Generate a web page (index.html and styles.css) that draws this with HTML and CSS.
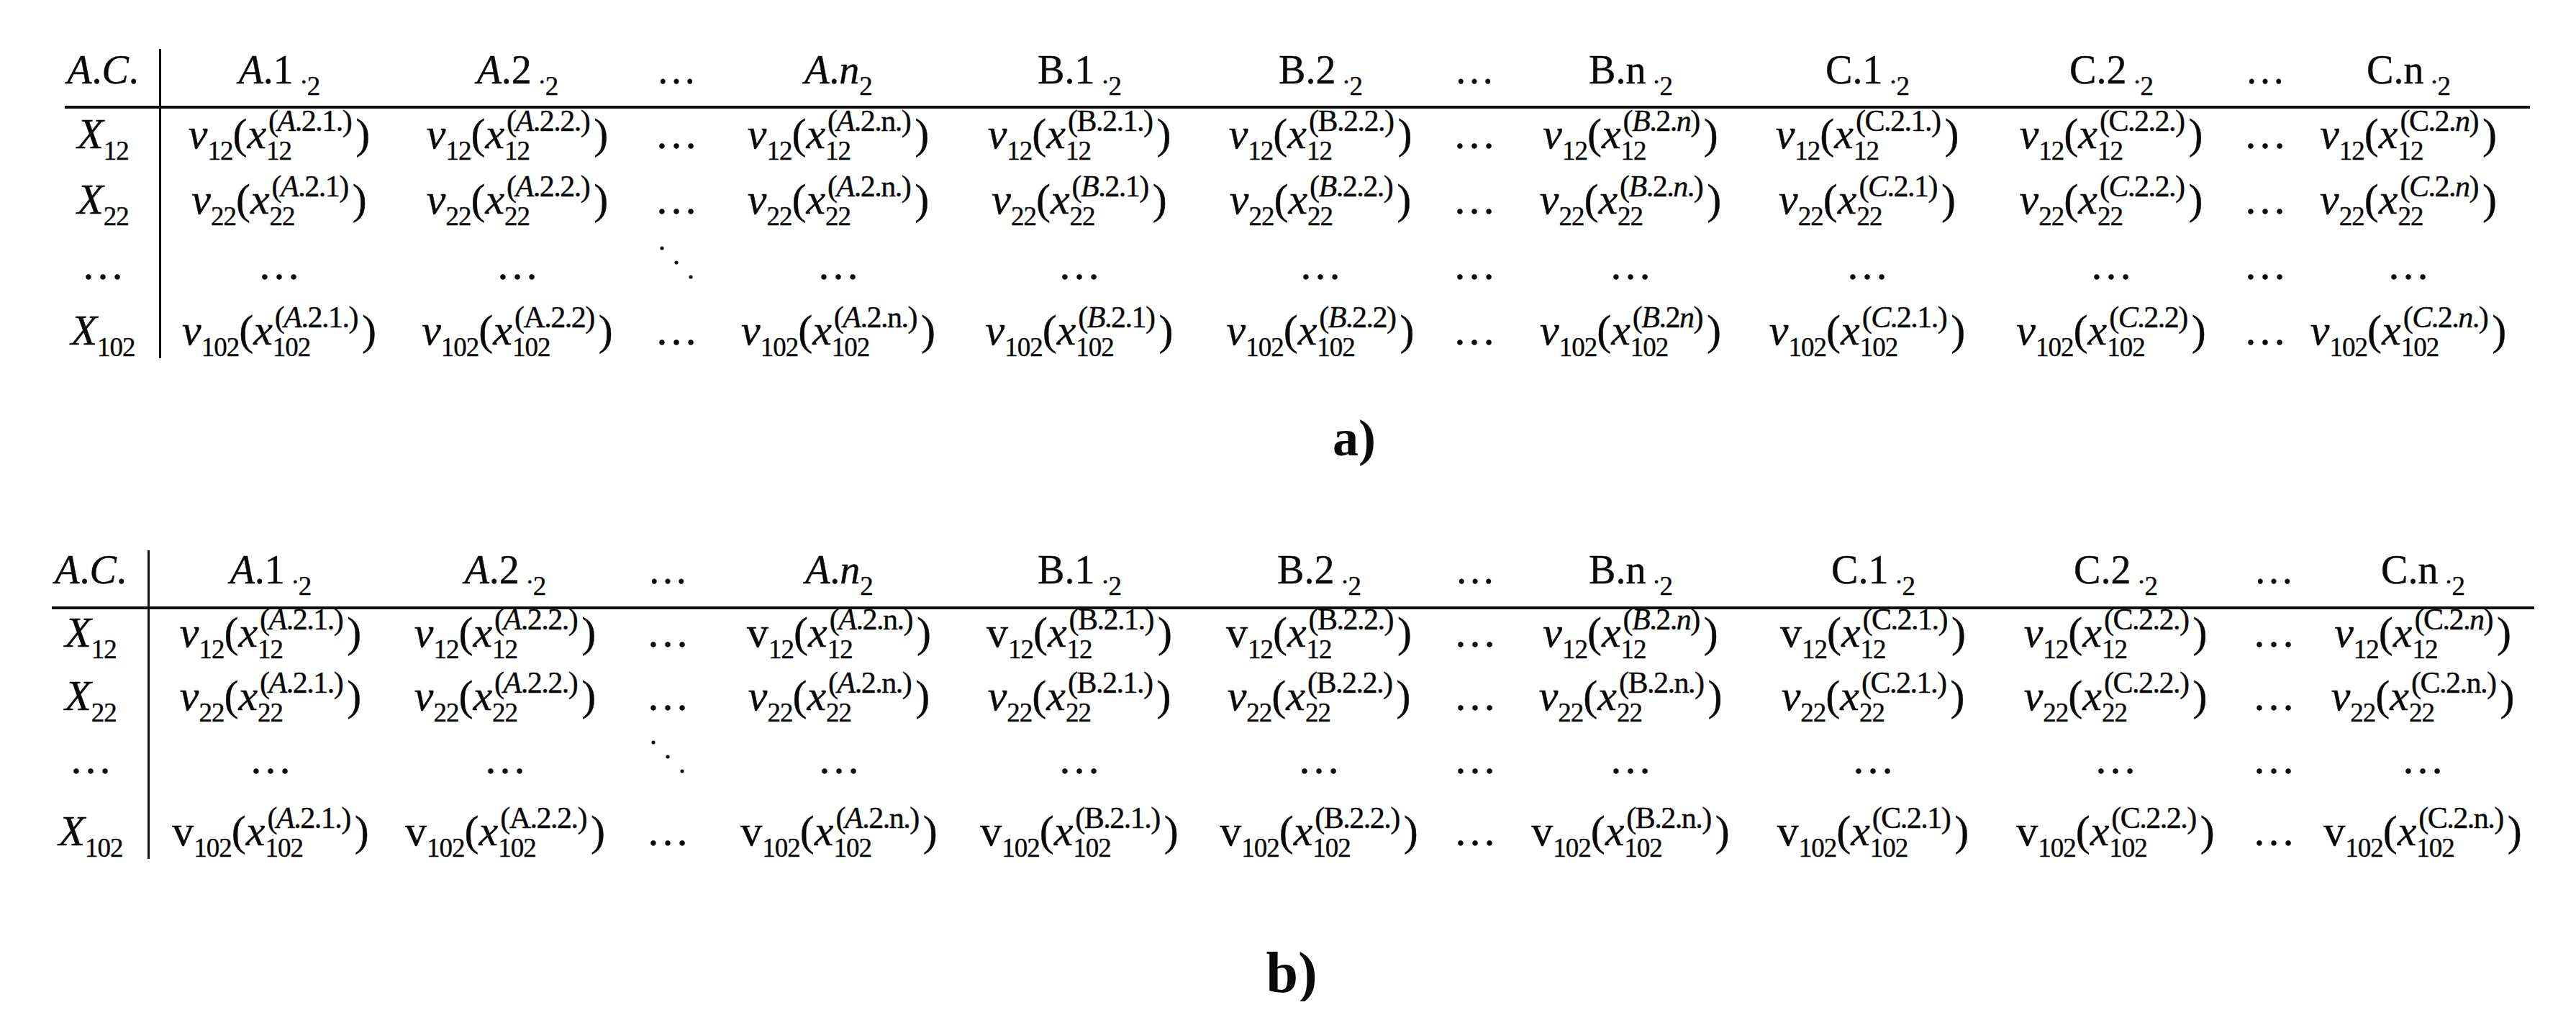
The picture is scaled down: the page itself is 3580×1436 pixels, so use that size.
FILE: index.html
```html
<!DOCTYPE html>
<html lang="en">
<head>
<meta charset="utf-8">
<title>Matrices a) and b)</title>
<link rel="stylesheet" href="styles.css">
</head>
<body>
<div class="page">

<div class="tbl tbl-a">
  <!-- header -->
  <div class="c c0 th"><span class="m"><i>A</i>.<i>C</i>.</span></div>
  <div class="c th"><span class="m"><i>A</i>.1<span class="hdot">.</span><sub>2</sub></span></div>
  <div class="c th"><span class="m"><i>A</i>.2<span class="hdot">.</span><sub>2</sub></span></div>
  <div class="c th"><span class="m">…</span></div>
  <div class="c th"><span class="m"><i>A</i>.<i>n</i><sub>2</sub></span></div>
  <div class="c th"><span class="m">B.1<span class="hdot">.</span><sub>2</sub></span></div>
  <div class="c th"><span class="m">B.2<span class="hdot">.</span><sub>2</sub></span></div>
  <div class="c th"><span class="m">…</span></div>
  <div class="c th"><span class="m">B.n<span class="hdot">.</span><sub>2</sub></span></div>
  <div class="c th"><span class="m">C.1<span class="hdot">.</span><sub>2</sub></span></div>
  <div class="c th"><span class="m">C.2<span class="hdot">.</span><sub>2</sub></span></div>
  <div class="c th"><span class="m">…</span></div>
  <div class="c th"><span class="m">C.n<span class="hdot">.</span><sub>2</sub></span></div>

  <!-- row X12 -->
  <div class="c c0 td"><span class="m"><i>X</i><sub>12</sub></span></div>
  <div class="c td"><span class="m"><i>v</i><sub>12</sub>(<i>x</i><span class="ss"><span class="sp">(<i>A</i>.2.1.)</span><span class="sb">12</span></span><span class="cp">)</span></span></div>
  <div class="c td"><span class="m"><i>v</i><sub>12</sub>(<i>x</i><span class="ss"><span class="sp">(<i>A</i>.2.2.)</span><span class="sb">12</span></span><span class="cp">)</span></span></div>
  <div class="c td"><span class="m">…</span></div>
  <div class="c td"><span class="m"><i>v</i><sub>12</sub>(<i>x</i><span class="ss"><span class="sp">(<i>A</i>.2.n.)</span><span class="sb">12</span></span><span class="cp">)</span></span></div>
  <div class="c td"><span class="m"><i>v</i><sub>12</sub>(<i>x</i><span class="ss"><span class="sp">(B.2.1.)</span><span class="sb">12</span></span><span class="cp">)</span></span></div>
  <div class="c td"><span class="m"><i>v</i><sub>12</sub>(<i>x</i><span class="ss"><span class="sp">(B.2.2.)</span><span class="sb">12</span></span><span class="cp">)</span></span></div>
  <div class="c td"><span class="m">…</span></div>
  <div class="c td"><span class="m"><i>v</i><sub>12</sub>(<i>x</i><span class="ss"><span class="sp">(<i>B</i>.2.<i>n</i>)</span><span class="sb">12</span></span><span class="cp">)</span></span></div>
  <div class="c td"><span class="m"><i>v</i><sub>12</sub>(<i>x</i><span class="ss"><span class="sp">(C.2.1.)</span><span class="sb">12</span></span><span class="cp">)</span></span></div>
  <div class="c td"><span class="m"><i>v</i><sub>12</sub>(<i>x</i><span class="ss"><span class="sp">(C.2.2.)</span><span class="sb">12</span></span><span class="cp">)</span></span></div>
  <div class="c td"><span class="m">…</span></div>
  <div class="c td"><span class="m"><i>v</i><sub>12</sub>(<i>x</i><span class="ss"><span class="sp">(C.2.<i>n</i>)</span><span class="sb">12</span></span><span class="cp">)</span></span></div>

  <!-- row X22 -->
  <div class="c c0 td"><span class="m"><i>X</i><sub>22</sub></span></div>
  <div class="c td"><span class="m"><i>v</i><sub>22</sub>(<i>x</i><span class="ss"><span class="sp">(<i>A</i>.2.1)</span><span class="sb">22</span></span><span class="cp">)</span></span></div>
  <div class="c td"><span class="m"><i>v</i><sub>22</sub>(<i>x</i><span class="ss"><span class="sp">(<i>A</i>.2.2.)</span><span class="sb">22</span></span><span class="cp">)</span></span></div>
  <div class="c td"><span class="m">…</span></div>
  <div class="c td"><span class="m"><i>v</i><sub>22</sub>(<i>x</i><span class="ss"><span class="sp">(<i>A</i>.2.n.)</span><span class="sb">22</span></span><span class="cp">)</span></span></div>
  <div class="c td"><span class="m"><i>v</i><sub>22</sub>(<i>x</i><span class="ss"><span class="sp">(<i>B</i>.2.1)</span><span class="sb">22</span></span><span class="cp">)</span></span></div>
  <div class="c td"><span class="m"><i>v</i><sub>22</sub>(<i>x</i><span class="ss"><span class="sp">(<i>B</i>.2.2.)</span><span class="sb">22</span></span><span class="cp">)</span></span></div>
  <div class="c td"><span class="m">…</span></div>
  <div class="c td"><span class="m"><i>v</i><sub>22</sub>(<i>x</i><span class="ss"><span class="sp">(<i>B</i>.2.<i>n</i>.)</span><span class="sb">22</span></span><span class="cp">)</span></span></div>
  <div class="c td"><span class="m"><i>v</i><sub>22</sub>(<i>x</i><span class="ss"><span class="sp">(<i>C</i>.2.1)</span><span class="sb">22</span></span><span class="cp">)</span></span></div>
  <div class="c td"><span class="m"><i>v</i><sub>22</sub>(<i>x</i><span class="ss"><span class="sp">(<i>C</i>.2.2.)</span><span class="sb">22</span></span><span class="cp">)</span></span></div>
  <div class="c td"><span class="m">…</span></div>
  <div class="c td"><span class="m"><i>v</i><sub>22</sub>(<i>x</i><span class="ss"><span class="sp">(<i>C</i>.2.<i>n</i>)</span><span class="sb">22</span></span><span class="cp">)</span></span></div>

  <!-- row dots -->
  <div class="c c0 td"><span class="m">…</span></div>
  <div class="c td"><span class="m">…</span></div>
  <div class="c td"><span class="m">…</span></div>
  <div class="c td"><span class="m"><svg class="ddots" width="48" height="48" viewBox="0 0 48 48"><circle cx="4" cy="4" r="2.6"/><circle cx="24" cy="24" r="2.6"/><circle cx="44" cy="44" r="2.6"/></svg></span></div>
  <div class="c td"><span class="m">…</span></div>
  <div class="c td"><span class="m">…</span></div>
  <div class="c td"><span class="m">…</span></div>
  <div class="c td"><span class="m">…</span></div>
  <div class="c td"><span class="m">…</span></div>
  <div class="c td"><span class="m">…</span></div>
  <div class="c td"><span class="m">…</span></div>
  <div class="c td"><span class="m">…</span></div>
  <div class="c td"><span class="m">…</span></div>

  <!-- row X102 -->
  <div class="c c0 td"><span class="m"><i>X</i><sub>102</sub></span></div>
  <div class="c td"><span class="m"><i>v</i><sub>102</sub>(<i>x</i><span class="ss"><span class="sp">(<i>A</i>.2.1.)</span><span class="sb">102</span></span><span class="cp">)</span></span></div>
  <div class="c td"><span class="m"><i>v</i><sub>102</sub>(<i>x</i><span class="ss"><span class="sp">(A.2.2)</span><span class="sb">102</span></span><span class="cp">)</span></span></div>
  <div class="c td"><span class="m">…</span></div>
  <div class="c td"><span class="m"><i>v</i><sub>102</sub>(<i>x</i><span class="ss"><span class="sp">(<i>A</i>.2.n.)</span><span class="sb">102</span></span><span class="cp">)</span></span></div>
  <div class="c td"><span class="m"><i>v</i><sub>102</sub>(<i>x</i><span class="ss"><span class="sp">(<i>B</i>.2.1)</span><span class="sb">102</span></span><span class="cp">)</span></span></div>
  <div class="c td"><span class="m"><i>v</i><sub>102</sub>(<i>x</i><span class="ss"><span class="sp">(<i>B</i>.2.2)</span><span class="sb">102</span></span><span class="cp">)</span></span></div>
  <div class="c td"><span class="m">…</span></div>
  <div class="c td"><span class="m"><i>v</i><sub>102</sub>(<i>x</i><span class="ss"><span class="sp">(<i>B</i>.2<i>n</i>)</span><span class="sb">102</span></span><span class="cp">)</span></span></div>
  <div class="c td"><span class="m"><i>v</i><sub>102</sub>(<i>x</i><span class="ss"><span class="sp">(<i>C</i>.2.1.)</span><span class="sb">102</span></span><span class="cp">)</span></span></div>
  <div class="c td"><span class="m"><i>v</i><sub>102</sub>(<i>x</i><span class="ss"><span class="sp">(<i>C</i>.2.2)</span><span class="sb">102</span></span><span class="cp">)</span></span></div>
  <div class="c td"><span class="m">…</span></div>
  <div class="c td"><span class="m"><i>v</i><sub>102</sub>(<i>x</i><span class="ss"><span class="sp">(<i>C</i>.2.<i>n</i>.)</span><span class="sb">102</span></span><span class="cp">)</span></span></div>
</div>

<div class="cap cap-a">a)</div>

<div class="tbl tbl-b">
  <!-- header -->
  <div class="c c0 th"><span class="m"><i>A</i>.<i>C</i>.</span></div>
  <div class="c th"><span class="m"><i>A</i>.1<span class="hdot">.</span><sub>2</sub></span></div>
  <div class="c th"><span class="m"><i>A</i>.2<span class="hdot">.</span><sub>2</sub></span></div>
  <div class="c th"><span class="m">…</span></div>
  <div class="c th"><span class="m"><i>A</i>.<i>n</i><sub>2</sub></span></div>
  <div class="c th"><span class="m">B.1<span class="hdot">.</span><sub>2</sub></span></div>
  <div class="c th"><span class="m">B.2<span class="hdot">.</span><sub>2</sub></span></div>
  <div class="c th"><span class="m">…</span></div>
  <div class="c th"><span class="m">B.n<span class="hdot">.</span><sub>2</sub></span></div>
  <div class="c th"><span class="m">C.1<span class="hdot">.</span><sub>2</sub></span></div>
  <div class="c th"><span class="m">C.2<span class="hdot">.</span><sub>2</sub></span></div>
  <div class="c th"><span class="m">…</span></div>
  <div class="c th"><span class="m">C.n<span class="hdot">.</span><sub>2</sub></span></div>

  <!-- row X12 -->
  <div class="c c0 td"><span class="m"><i>X</i><sub>12</sub></span></div>
  <div class="c td"><span class="m"><i>v</i><sub>12</sub>(<i>x</i><span class="ss"><span class="sp">(<i>A</i>.2.1.)</span><span class="sb">12</span></span><span class="cp">)</span></span></div>
  <div class="c td"><span class="m"><i>v</i><sub>12</sub>(<i>x</i><span class="ss"><span class="sp">(<i>A</i>.2.2.)</span><span class="sb">12</span></span><span class="cp">)</span></span></div>
  <div class="c td"><span class="m">…</span></div>
  <div class="c td"><span class="m">v<sub>12</sub>(<i>x</i><span class="ss"><span class="sp">(<i>A</i>.2.n.)</span><span class="sb">12</span></span><span class="cp">)</span></span></div>
  <div class="c td"><span class="m">v<sub>12</sub>(<i>x</i><span class="ss"><span class="sp">(B.2.1.)</span><span class="sb">12</span></span><span class="cp">)</span></span></div>
  <div class="c td"><span class="m">v<sub>12</sub>(<i>x</i><span class="ss"><span class="sp">(B.2.2.)</span><span class="sb">12</span></span><span class="cp">)</span></span></div>
  <div class="c td"><span class="m">…</span></div>
  <div class="c td"><span class="m"><i>v</i><sub>12</sub>(<i>x</i><span class="ss"><span class="sp">(<i>B</i>.2.<i>n</i>)</span><span class="sb">12</span></span><span class="cp">)</span></span></div>
  <div class="c td"><span class="m">v<sub>12</sub>(<i>x</i><span class="ss"><span class="sp">(C.2.1.)</span><span class="sb">12</span></span><span class="cp">)</span></span></div>
  <div class="c td"><span class="m"><i>v</i><sub>12</sub>(<i>x</i><span class="ss"><span class="sp">(C.2.2.)</span><span class="sb">12</span></span><span class="cp">)</span></span></div>
  <div class="c td"><span class="m">…</span></div>
  <div class="c td"><span class="m"><i>v</i><sub>12</sub>(<i>x</i><span class="ss"><span class="sp">(C.2.<i>n</i>)</span><span class="sb">12</span></span><span class="cp">)</span></span></div>

  <!-- row X22 -->
  <div class="c c0 td"><span class="m"><i>X</i><sub>22</sub></span></div>
  <div class="c td"><span class="m"><i>v</i><sub>22</sub>(<i>x</i><span class="ss"><span class="sp">(<i>A</i>.2.1.)</span><span class="sb">22</span></span><span class="cp">)</span></span></div>
  <div class="c td"><span class="m"><i>v</i><sub>22</sub>(<i>x</i><span class="ss"><span class="sp">(<i>A</i>.2.2.)</span><span class="sb">22</span></span><span class="cp">)</span></span></div>
  <div class="c td"><span class="m">…</span></div>
  <div class="c td"><span class="m"><i>v</i><sub>22</sub>(<i>x</i><span class="ss"><span class="sp">(<i>A</i>.2.n.)</span><span class="sb">22</span></span><span class="cp">)</span></span></div>
  <div class="c td"><span class="m"><i>v</i><sub>22</sub>(<i>x</i><span class="ss"><span class="sp">(B.2.1.)</span><span class="sb">22</span></span><span class="cp">)</span></span></div>
  <div class="c td"><span class="m"><i>v</i><sub>22</sub>(<i>x</i><span class="ss"><span class="sp">(B.2.2.)</span><span class="sb">22</span></span><span class="cp">)</span></span></div>
  <div class="c td"><span class="m">…</span></div>
  <div class="c td"><span class="m"><i>v</i><sub>22</sub>(<i>x</i><span class="ss"><span class="sp">(B.2.n.)</span><span class="sb">22</span></span><span class="cp">)</span></span></div>
  <div class="c td"><span class="m"><i>v</i><sub>22</sub>(<i>x</i><span class="ss"><span class="sp">(C.2.1.)</span><span class="sb">22</span></span><span class="cp">)</span></span></div>
  <div class="c td"><span class="m"><i>v</i><sub>22</sub>(<i>x</i><span class="ss"><span class="sp">(C.2.2.)</span><span class="sb">22</span></span><span class="cp">)</span></span></div>
  <div class="c td"><span class="m">…</span></div>
  <div class="c td"><span class="m"><i>v</i><sub>22</sub>(<i>x</i><span class="ss"><span class="sp">(C.2.n.)</span><span class="sb">22</span></span><span class="cp">)</span></span></div>

  <!-- row dots -->
  <div class="c c0 td"><span class="m">…</span></div>
  <div class="c td"><span class="m">…</span></div>
  <div class="c td"><span class="m">…</span></div>
  <div class="c td"><span class="m"><svg class="ddots" width="48" height="48" viewBox="0 0 48 48"><circle cx="4" cy="4" r="2.6"/><circle cx="24" cy="24" r="2.6"/><circle cx="44" cy="44" r="2.6"/></svg></span></div>
  <div class="c td"><span class="m">…</span></div>
  <div class="c td"><span class="m">…</span></div>
  <div class="c td"><span class="m">…</span></div>
  <div class="c td"><span class="m">…</span></div>
  <div class="c td"><span class="m">…</span></div>
  <div class="c td"><span class="m">…</span></div>
  <div class="c td"><span class="m">…</span></div>
  <div class="c td"><span class="m">…</span></div>
  <div class="c td"><span class="m">…</span></div>

  <!-- row X102 -->
  <div class="c c0 td"><span class="m"><i>X</i><sub>102</sub></span></div>
  <div class="c td"><span class="m">v<sub>102</sub>(<i>x</i><span class="ss"><span class="sp">(<i>A</i>.2.1.)</span><span class="sb">102</span></span><span class="cp">)</span></span></div>
  <div class="c td"><span class="m">v<sub>102</sub>(<i>x</i><span class="ss"><span class="sp">(A.2.2.)</span><span class="sb">102</span></span><span class="cp">)</span></span></div>
  <div class="c td"><span class="m">…</span></div>
  <div class="c td"><span class="m">v<sub>102</sub>(<i>x</i><span class="ss"><span class="sp">(<i>A</i>.2.n.)</span><span class="sb">102</span></span><span class="cp">)</span></span></div>
  <div class="c td"><span class="m">v<sub>102</sub>(<i>x</i><span class="ss"><span class="sp">(B.2.1.)</span><span class="sb">102</span></span><span class="cp">)</span></span></div>
  <div class="c td"><span class="m">v<sub>102</sub>(<i>x</i><span class="ss"><span class="sp">(B.2.2.)</span><span class="sb">102</span></span><span class="cp">)</span></span></div>
  <div class="c td"><span class="m">…</span></div>
  <div class="c td"><span class="m">v<sub>102</sub>(<i>x</i><span class="ss"><span class="sp">(B.2.n.)</span><span class="sb">102</span></span><span class="cp">)</span></span></div>
  <div class="c td"><span class="m">v<sub>102</sub>(<i>x</i><span class="ss"><span class="sp">(C.2.1)</span><span class="sb">102</span></span><span class="cp">)</span></span></div>
  <div class="c td"><span class="m">v<sub>102</sub>(<i>x</i><span class="ss"><span class="sp">(C.2.2.)</span><span class="sb">102</span></span><span class="cp">)</span></span></div>
  <div class="c td"><span class="m">…</span></div>
  <div class="c td"><span class="m">v<sub>102</sub>(<i>x</i><span class="ss"><span class="sp">(C.2.n.)</span><span class="sb">102</span></span><span class="cp">)</span></span></div>
</div>

<div class="cap cap-b">b)</div>

</div>
</body>
</html>
```

FILE: styles.css
```css
html, body {
  margin: 0;
  padding: 0;
  background: #ffffff;
  color: #0a0a0a;
  font-family: "Liberation Serif", "Times New Roman", serif;
}

.page {
  width: 3580px;
  padding-top: 68px;
}

.tbl {
  display: grid;
  -webkit-text-stroke: 0.4px #0a0a0a;
}

.tbl-a {
  margin-left: 90px;
  grid-template-columns: 134px 328px 334px 108px 342px 328px 342px 86px 348px 310px 368px 60px 338px;
  grid-template-rows: 83px 91px 91px 91px 74px;
  --hl: 58px;
  --bl: 71px;
}

.tbl-b {
  margin-top: 120px;
  margin-left: 72px;
  grid-template-columns: 136px 336px 316px 136px 340px 328px 338px 96px 336px 338px 336px 104px 310px;
  grid-template-rows: 82px 88px 88px 100px 71px;
  --hl: 54px;
  --bl: 65px;
}

.c {
  display: flex;
  justify-content: center;
  align-items: flex-start;
  white-space: nowrap;
  min-width: 0;
}

.c0 {
  border-right: 3px solid #111;
  padding-right: 25px;
}

.th {
  border-bottom: 4px solid #111;
}

.th .m {
  font-size: 56px;
  line-height: var(--hl);
}

.td .m {
  font-size: 60px;
  line-height: var(--bl);
}

.m {
  display: block;
  white-space: nowrap;
}

.m sub {
  font-size: 37px;
  line-height: 0;
  vertical-align: -16px;
  letter-spacing: -1px;
}

.hdot {
  font-size: 36px;
  margin-left: 10px;
}

.ss {
  display: inline-block;
  vertical-align: -16px;
  line-height: 0;
}

.sp {
  display: block;
  font-size: 42px;
  line-height: 0;
  padding-left: 3px;
  letter-spacing: -1.5px;
}

.sb {
  display: block;
  font-size: 37px;
  line-height: 0;
  padding-top: 42px;
  letter-spacing: -1px;
}

.cp {
  margin-left: 6px;
}

.ddots {
  vertical-align: -1px;
  fill: #111;
}

.cap {
  text-align: center;
  font-weight: bold;
}

.cap-a {
  font-size: 72px;
  line-height: 72px;
  margin-top: 75px;
  padding-left: 184px;
}

.cap-b {
  font-size: 80px;
  line-height: 80px;
  margin-top: 118px;
  padding-left: 10px;
}
```
